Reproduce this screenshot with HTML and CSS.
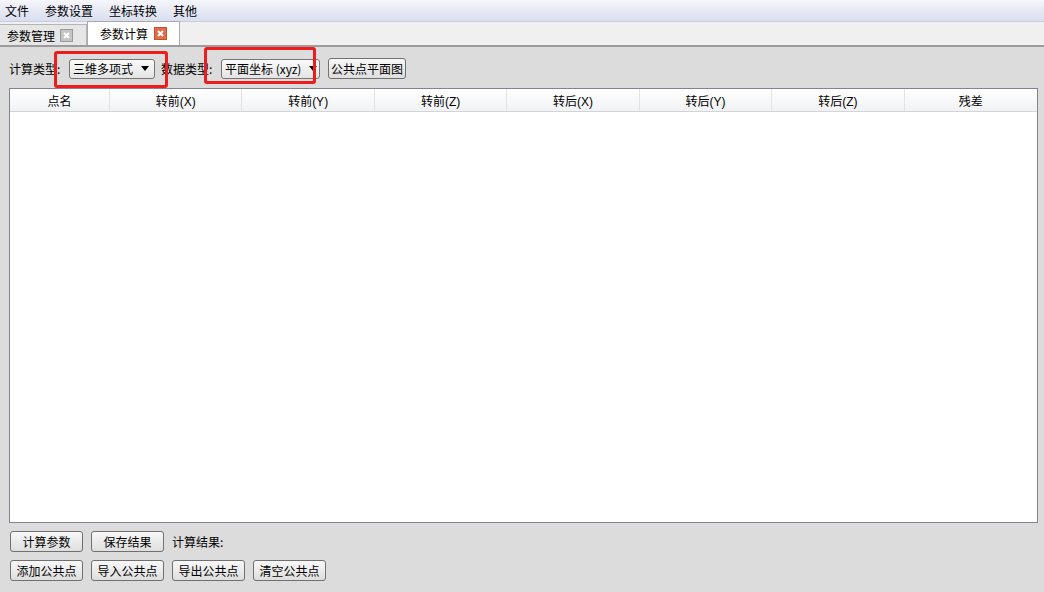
FILE: index.html
```html
<!DOCTYPE html>
<html lang="zh">
<head>
<meta charset="utf-8">
<title>参数计算</title>
<link rel="stylesheet" href="styles.css">
</head>
<body>
<div class="app">
  <div class="menubar">
    <span class="menu-item">文件</span>
    <span class="menu-item">参数设置</span>
    <span class="menu-item">坐标转换</span>
    <span class="menu-item">其他</span>
  </div>
  <div class="tabbar">
    <div class="tab">参数管理<span class="close close-gray">
      <svg width="11" height="11" viewBox="0 0 11 11"><path d="M3 3L8 8M8 3L3 8" stroke="#fff" stroke-width="2"/></svg></span></div>
    <div class="tab tab-active">参数计算<span class="close close-red">
      <svg width="11" height="11" viewBox="0 0 11 11"><path d="M3 3L8 8M8 3L3 8" stroke="#fff" stroke-width="2"/></svg></span></div>
  </div>
  <div class="content">
    <div class="toolbar">
      <span class="label label-a">计算类型:</span>
      <div class="combo combo-a"><span>三维多项式</span><span class="arrow"></span></div>
      <span class="label label-b">数据类型:</span>
      <div class="combo combo-b"><span>平面坐标 (xyz)</span><span class="arrow"></span></div>
      <button class="btn btn-plot">公共点平面图</button>
    </div>
    <div class="table">
      <div class="thead">
        <div class="th">点名</div>
        <div class="th">转前(X)</div>
        <div class="th">转前(Y)</div>
        <div class="th">转前(Z)</div>
        <div class="th">转后(X)</div>
        <div class="th">转后(Y)</div>
        <div class="th">转后(Z)</div>
        <div class="th th-last">残差</div>
      </div>
      <div class="tbody"></div>
    </div>
    <div class="btn-row row1">
      <button class="btn">计算参数</button>
      <button class="btn">保存结果</button>
      <span class="label">计算结果:</span>
    </div>
    <div class="btn-row row2">
      <button class="btn">添加公共点</button>
      <button class="btn">导入公共点</button>
      <button class="btn">导出公共点</button>
      <button class="btn">清空公共点</button>
    </div>
  </div>
  <div class="mark mark-1"></div>
  <div class="mark mark-2"></div>
</div>
</body>
</html>
```
FILE: styles.css
```css
* { box-sizing: border-box; }
html, body { margin: 0; padding: 0; }
body {
  width: 1044px;
  height: 592px;
  overflow: hidden;
  background: #dcdcdc;
  font-family: "Noto Sans CJK SC", "Liberation Sans", sans-serif;
  font-size: 12px;
  color: #000;
}
.app { position: relative; width: 1044px; height: 592px; }
.menubar {
  height: 22px;
  display: flex;
  align-items: center;
  padding-left: 5px;
  gap: 16px;
  background: linear-gradient(#f6f7fb 0%, #e9ecf6 40%, #d9deef 100%);
  border-bottom: 1px solid #c8cde0;
}
.menu-item { line-height: 20px; }
.tabbar {
  height: 25px;
  background: #f0f0f0;
  display: flex;
  align-items: flex-end;
  border-bottom: 2px solid #9c9c9c;
}
.tab {
  height: 21px;
  width: 87px;
  background: #e6e6e6;
  border: 1px solid #b4b4b4;
  border-bottom: none;
  border-left: none;
  display: flex;
  align-items: center;
  padding-left: 7px;
  gap: 5px;
}
.tab-active {
  height: 24px;
  width: 93px;
  background: #fff;
  border: 1px solid #a8a8a8;
  border-bottom: none;
  padding-left: 12px;
  gap: 6px;
}
.close {
  width: 13px;
  height: 13px;
  display: flex;
  align-items: center;
  justify-content: center;
  border: 1px solid #9a9a9a;
}
.close-gray { background: #c4c4c4; }
.close-red { background: #e46a48; border-color: #c4502e; }
.content {
  padding: 0 6px 0 9px;
  background: #dcdcdc;
}
.toolbar {
  height: 41px;
  display: flex;
  align-items: center;
  padding-top: 2px;
}
.label { line-height: 20px; }
.label-a { width: 60px; }
.combo {
  height: 20px;
  border: 1px solid #777;
  border-radius: 3px;
  background: linear-gradient(#fafafa, #e4e4e4);
  display: flex;
  align-items: center;
  justify-content: space-between;
  padding: 0 5px 0 3px;
}
.combo-a { width: 86px; }
.combo-b { width: 99px; padding-right: 2px; }
.arrow {
  width: 0; height: 0;
  border-left: 4px solid transparent;
  border-right: 4px solid transparent;
  border-top: 5px solid #000;
}
.label-b { margin-left: 6px; width: 60px; }
.btn {
  font-family: inherit;
  font-size: 12px;
  color: #000;
  height: 21px;
  padding: 0 2px;
  border: 1px solid #707070;
  border-radius: 3px;
  background: linear-gradient(#f8f8f8, #dedede);
  line-height: 18px;
}
.btn-plot { margin-left: 8px; width: 78px; }
.table {
  width: 1029px;
  height: 435px;
  border: 1px solid #828290;
  background: #fff;
  display: flex;
  flex-direction: column;
}
.thead {
  height: 23px;
  display: grid;
  grid-template-columns: 100px repeat(7, 1fr);
  background: linear-gradient(#ffffff, #f1f2f4);
  border-bottom: 1px solid #d4d4d8;
}
.th {
  display: flex;
  align-items: center;
  justify-content: center;
  border-right: 1px solid #e2e3e6;
  font-family: "Liberation Sans", "Noto Sans CJK SC", sans-serif;
}
.th-last { border-right: none; }
.tbody { flex: 1; }
.btn-row {
  display: flex;
  align-items: center;
  gap: 8px;
  padding-left: 1px;
}
.btn-row .btn { width: 73px; }
.row1 { margin-top: 8px; }
.row2 { margin-top: 8px; }
.mark {
  position: absolute;
  border: 3px solid #ee1c1c;
  border-radius: 3px;
}
.mark-1 { left: 54px; top: 51px; width: 114px; height: 37px; }
.mark-2 { left: 204px; top: 47px; width: 112px; height: 37px; }
```
